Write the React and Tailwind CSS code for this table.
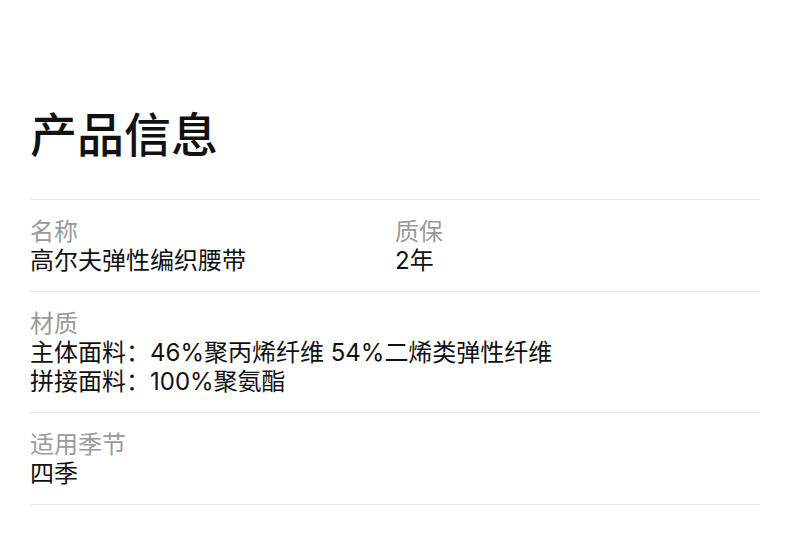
const rows = [
  {
    cols: [
      { label: "名称", value: ["高尔夫弹性编织腰带"] },
      { label: "质保", value: ["2年"] },
    ],
  },
  {
    cols: [
      {
        label: "材质",
        value: ["主体面料：46%聚丙烯纤维 54%二烯类弹性纤维", "拼接面料：100%聚氨酯"],
      },
    ],
  },
  { cols: [{ label: "适用季节", value: ["四季"] }] },
];

// Latin runs get a wider face like the reference
function Mixed({ text }) {
  const parts = text.split(/([0-9% ]+)/);
  return parts.map((p, i) =>
    /[0-9% ]/.test(p) ? (
      <span key={i} className="font-['Inter'] leading-none">
        {p}
      </span>
    ) : (
      <span key={i}>{p}</span>
    )
  );
}

export default function App() {
  return (
    <div
      className="min-h-screen w-full bg-white px-[30px] pt-[98px] text-[#111]"
      style={{ fontFamily: '"Noto Sans CJK SC", "Noto Sans", sans-serif' }}
    >
      <h1 className="text-[47px] leading-[68px] font-medium">产品信息</h1>

      <div className="mt-[33px] w-[730px] border-b border-[#e6e6e6]">
        {rows.map((row, i) => (
          <div key={i} className="grid grid-cols-2 border-t border-[#e6e6e6] pt-[15px] pb-[18px]">
            {row.cols.map((c) => (
              <div key={c.label} className={row.cols.length === 1 ? "col-span-2" : ""}>
                <div className="text-[24px] leading-[29px] text-[#9a9a9a]">{c.label}</div>
                {c.value.map((v) => (
                  <div key={v} className="text-[24px] leading-[29px] text-[#111] whitespace-pre">
                    <Mixed text={v} />
                  </div>
                ))}
              </div>
            ))}
          </div>
        ))}
      </div>
    </div>
  );
}
